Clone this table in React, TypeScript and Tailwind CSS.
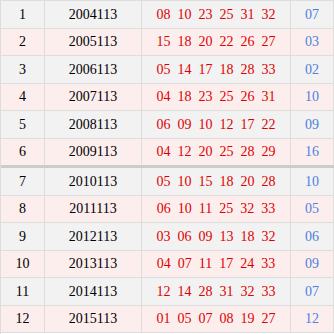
const ROWS = [
  { no: 1, issue: "2004113", reds: ["08", "10", "23", "25", "31", "32"], blue: "07" },
  { no: 2, issue: "2005113", reds: ["15", "18", "20", "22", "26", "27"], blue: "03" },
  { no: 3, issue: "2006113", reds: ["05", "14", "17", "18", "28", "33"], blue: "02" },
  { no: 4, issue: "2007113", reds: ["04", "18", "23", "25", "26", "31"], blue: "10" },
  { no: 5, issue: "2008113", reds: ["06", "09", "10", "12", "17", "22"], blue: "09" },
  { no: 6, issue: "2009113", reds: ["04", "12", "20", "25", "28", "29"], blue: "16" },
  { no: 7, issue: "2010113", reds: ["05", "10", "15", "18", "20", "28"], blue: "10" },
  { no: 8, issue: "2011113", reds: ["06", "10", "11", "25", "32", "33"], blue: "05" },
  { no: 9, issue: "2012113", reds: ["03", "06", "09", "13", "18", "32"], blue: "06" },
  { no: 10, issue: "2013113", reds: ["04", "07", "11", "17", "24", "33"], blue: "09" },
  { no: 11, issue: "2014113", reds: ["12", "14", "28", "31", "32", "33"], blue: "07" },
  { no: 12, issue: "2015113", reds: ["01", "05", "07", "08", "19", "27"], blue: "12" },
];

export default function App() {
  return (
    <div
      className="w-[334px] h-[334px] overflow-hidden bg-white border-t border-l border-[#dddddd] text-[14px]"
      style={{ fontFamily: '"Liberation Serif", "Times New Roman", serif' }}
    >
      {ROWS.map((r) => (
        <div
          key={r.no}
          className={`flex h-[27.5px] items-center ${r.no % 2 === 1 ? "bg-[#f2f2f2]" : "bg-[#fdeeee]"} ${
            r.no === 6 ? "border-b-[3px] border-[#cccccc] h-[29.5px]" : "border-b border-[#dddddd]"
          }`}
        >
          <div className="w-[44px] h-full flex items-center justify-center border-r border-[#dddddd] text-black">
            {r.no}
          </div>
          <div className="w-[97px] h-full flex items-center justify-center border-r border-[#dddddd] text-black">
            {r.issue}
          </div>
          <div className="w-[149px] h-full flex items-center justify-center gap-[7px] border-r border-[#dddddd] text-[#e00000]">
            {r.reds.map((n, i) => (
              <span key={i}>{n}</span>
            ))}
          </div>
          <div className="flex-1 h-full flex items-center justify-center border-r border-[#dddddd] text-[#4f80de]">
            {r.blue}
          </div>
        </div>
      ))}
    </div>
  );
}
